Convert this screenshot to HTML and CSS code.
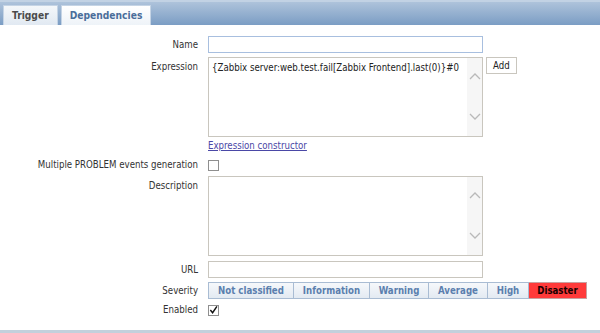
FILE: index.html
```html
<!DOCTYPE html>
<html lang="en">
<head>
<meta charset="UTF-8" />
<title>Trigger</title>
<link rel="stylesheet" href="styles.css">
</head>
<body>

<!-- Tabs -->
<div class="tabs">
  <span class="tab active">Trigger</span>
  <span class="tab">Dependencies</span>
</div>

<!-- Trigger form -->
<div class="form">
  <div class="row mid">
    <label>Name</label>
    <div class="field"><div class="input focus"></div></div>
  </div>

  <div class="row">
    <label class="top">Expression</label>
    <div class="field with-btn">
      <div class="area">
        <div class="area-text">{Zabbix server:web.test.fail[Zabbix Frontend].last(0)}#0</div>
        <div class="scroll">
          <svg width="12" height="8" viewBox="0 0 12 8"><path d="M1 7 L6 2 L11 7" fill="none" stroke="#b9b9b9" stroke-width="1.3"/></svg>
          <svg width="12" height="8" viewBox="0 0 12 8"><path d="M1 1 L6 6 L11 1" fill="none" stroke="#b9b9b9" stroke-width="1.3"/></svg>
        </div>
      </div>
      <button class="btn">Add</button>
    </div>
  </div>

  <div class="row link-row">
    <label></label>
    <div class="field"><a href="#" class="link">Expression constructor</a></div>
  </div>

  <div class="row mid">
    <label>Multiple PROBLEM events generation</label>
    <div class="field"><span class="check"></span></div>
  </div>

  <div class="row">
    <label class="top">Description</label>
    <div class="field">
      <div class="area">
        <div class="area-text"></div>
        <div class="scroll">
          <svg width="12" height="8" viewBox="0 0 12 8"><path d="M1 7 L6 2 L11 7" fill="none" stroke="#b9b9b9" stroke-width="1.3"/></svg>
          <svg width="12" height="8" viewBox="0 0 12 8"><path d="M1 1 L6 6 L11 1" fill="none" stroke="#b9b9b9" stroke-width="1.3"/></svg>
        </div>
      </div>
    </div>
  </div>

  <div class="row mid url-row">
    <label>URL</label>
    <div class="field"><div class="input"></div></div>
  </div>

  <div class="row mid">
    <label>Severity</label>
    <div class="field">
      <div class="severity">
        <span class="sev">Not classified</span>
        <span class="sev">Information</span>
        <span class="sev">Warning</span>
        <span class="sev">Average</span>
        <span class="sev">High</span>
        <span class="sev disaster">Disaster</span>
      </div>
    </div>
  </div>

  <div class="row mid">
    <label>Enabled</label>
    <div class="field">
      <span class="check">
        <svg width="10" height="10" viewBox="0 0 10 10"><path d="M1.5 5 L4 8 L8.8 1" fill="none" stroke="#111" stroke-width="1.6"/></svg>
      </span>
    </div>
  </div>
</div>

<div class="bottom-line"></div>

</body>
</html>
```

FILE: styles.css
```css
* {margin:0; padding:0; box-sizing:border-box;}
body {
  font-family: "DejaVu Sans Condensed", "DejaVu Sans", sans-serif;
  font-size: 9.6px;
  color: #333;
  background: #fff;
  width: 600px;
  height: 333px;
  overflow: hidden;
}

/* Tabs */
.tabs {
  height: 25px;
  background: linear-gradient(#aec3db, #7b9dc4);
  border-top: 2px solid #c2d2e4;
  display: flex;
  align-items: flex-end;
  gap: 3px;
  padding-left: 3px;
}
.tab {
  height: 20px;
  line-height: 20px;
  padding: 0 8px;
  font-weight: bold;
  font-size: 10.2px;
  color: #4a6d9a;
  background: linear-gradient(#ffffff, #eef3f8);
  border: 1px solid #c5d4e5;
  border-bottom: none;
}
.tab.active {
  color: #4b4b4b;
  background: linear-gradient(#f4f7fa, #e1e9f2);
}

/* Form rows */
.form {
  padding-top: 11px;
}
.row {
  display: grid;
  grid-template-columns: 198px 1fr;
  column-gap: 10px;
  margin-bottom: 4px;
}
.row.mid {
  align-items: center;
}
.row label {
  text-align: right;
  line-height: 14px;
}
.row label.top {
  padding-top: 3px;
}
.field {
  display: flex;
  align-items: flex-start;
}
.with-btn {
  gap: 3px;
}

.input {
  width: 275px;
  height: 17px;
  border: 1px solid #c9c6be;
  background: #fff;
}
.input.focus {
  border-color: #a8bfdf;
}

.area {
  width: 275px;
  height: 80px;
  border: 1px solid #c9c6be;
  display: flex;
}
.area-text {
  flex: 1;
  padding: 3px 2px 3px 3px;
  line-height: 13px;
  color: #222;
  white-space: nowrap;
  overflow: hidden;
}
.scroll {
  width: 15px;
  background: #f6f6f6;
  display: flex;
  flex-direction: column;
  align-items: center;
  justify-content: space-between;
  padding: 14px 0 15px;
}

.btn {
  height: 17px;
  padding: 0 6px;
  font-family: inherit;
  font-size: 9.6px;
  color: #222;
  background: #fff;
  border: 1px solid #c9c6be;
}

.link-row {
  margin-top: -2px;
  margin-bottom: 5px;
}
.link {
  color: #4a48a6;
  text-decoration: underline;
  line-height: 14px;
}

.url-row {
  margin-top: 5px;
}

.check {
  width: 11px;
  height: 11px;
  border: 1px solid #8f8f8f;
  background: #fff;
  display: flex;
  align-items: center;
  justify-content: center;
}

/* Severity buttons */
.severity {
  display: grid;
  grid-template-columns: 86px 76px 59px 59px 41px 58px;
}
.sev {
  height: 17px;
  line-height: 15px;
  text-align: center;
  font-weight: bold;
  color: #5b7fae;
  background: linear-gradient(#f6f8fb, #e3eaf2);
  border: 1px solid #a9bcd3;
  border-left: none;
}
.sev:first-child {
  border-left: 1px solid #a9bcd3;
}
.sev.disaster {
  background: #ff3a3a;
  color: #1a0000;
  border-color: #c9a0a0;
}

.bottom-line {
  position: absolute;
  left: 0;
  top: 330px;
  width: 600px;
  height: 3px;
  background: #c3d0dc;
}
```
